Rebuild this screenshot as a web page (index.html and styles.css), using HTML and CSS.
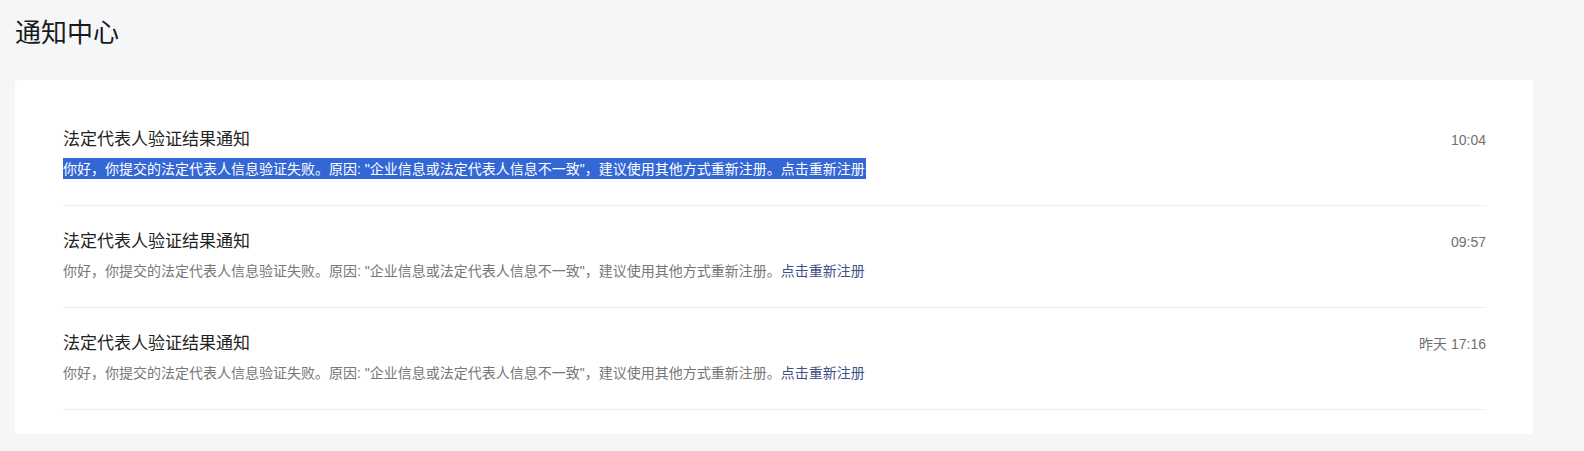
FILE: index.html
```html
<!DOCTYPE html>
<html lang="zh-CN">

<head>
    <meta charset="UTF-8">
    <meta name="viewport" content="width=device-width, initial-scale=1.0">
    <title>通知中心</title>
    <link rel="stylesheet" href="styles.css">
</head>

<body>
    <div id="thong-bao">
        <h1 class="tieu-de">通知中心</h1>
        <div class="the">
            <div class="muc">
                <div class="dong-tren">
                    <div class="ten">法定代表人验证结果通知</div>
                    <div class="gio">10:04</div>
                </div>
                <div class="noi-dung"><span class="chon">你好，你提交的法定代表人信息验证失败。原因: "企业信息或法定代表人信息不一致"，建议使用其他方式重新注册。<a href="#" class="lien-ket">点击重新注册</a></span></div>
            </div>
            <div class="muc">
                <div class="dong-tren">
                    <div class="ten">法定代表人验证结果通知</div>
                    <div class="gio">09:57</div>
                </div>
                <div class="noi-dung">你好，你提交的法定代表人信息验证失败。原因: "企业信息或法定代表人信息不一致"，建议使用其他方式重新注册。<a href="#" class="lien-ket">点击重新注册</a></div>
            </div>
            <div class="muc">
                <div class="dong-tren">
                    <div class="ten">法定代表人验证结果通知</div>
                    <div class="gio">昨天 17:16</div>
                </div>
                <div class="noi-dung">你好，你提交的法定代表人信息验证失败。原因: "企业信息或法定代表人信息不一致"，建议使用其他方式重新注册。<a href="#" class="lien-ket">点击重新注册</a></div>
            </div>
        </div>
    </div>
</body>

</html>
```

FILE: styles.css
```css
* {
    box-sizing: border-box;
    padding: 0;
    margin: 0;
}

body {
    background-color: #f5f6f8;
    font-family: "Liberation Sans", "Noto Sans CJK SC", sans-serif;
    color: #222;
}

#thong-bao {
    padding: 15px 51px 0 15px;
}

.tieu-de {
    font-size: 26px;
    font-weight: normal;
    line-height: 36px;
    margin-bottom: 29px;
    color: #1a1a1a;
}

.the {
    background-color: #fff;
    border-radius: 4px;
    padding: 24px 47px 24px 48px;
}

.muc {
    padding: 24px 0 25px;
    border-bottom: 1px solid #eeeeee;
}

.dong-tren {
    display: flex;
    justify-content: space-between;
    align-items: baseline;
    margin-bottom: 6px;
}

.ten {
    font-size: 17px;
    line-height: 24px;
    color: #222;
}

.gio {
    font-size: 14px;
    color: #707070;
}

.noi-dung {
    font-size: 14px;
    line-height: 22px;
    color: #777;
}

.lien-ket {
    color: #3f5185;
    text-decoration: none;
}

/* doan dang duoc chon (boi xanh) */
.chon {
    background-color: #3367d6;
    color: #fff;
    padding: 3px 1px 2px 0;
}

.chon .lien-ket {
    color: #fff;
}
```
